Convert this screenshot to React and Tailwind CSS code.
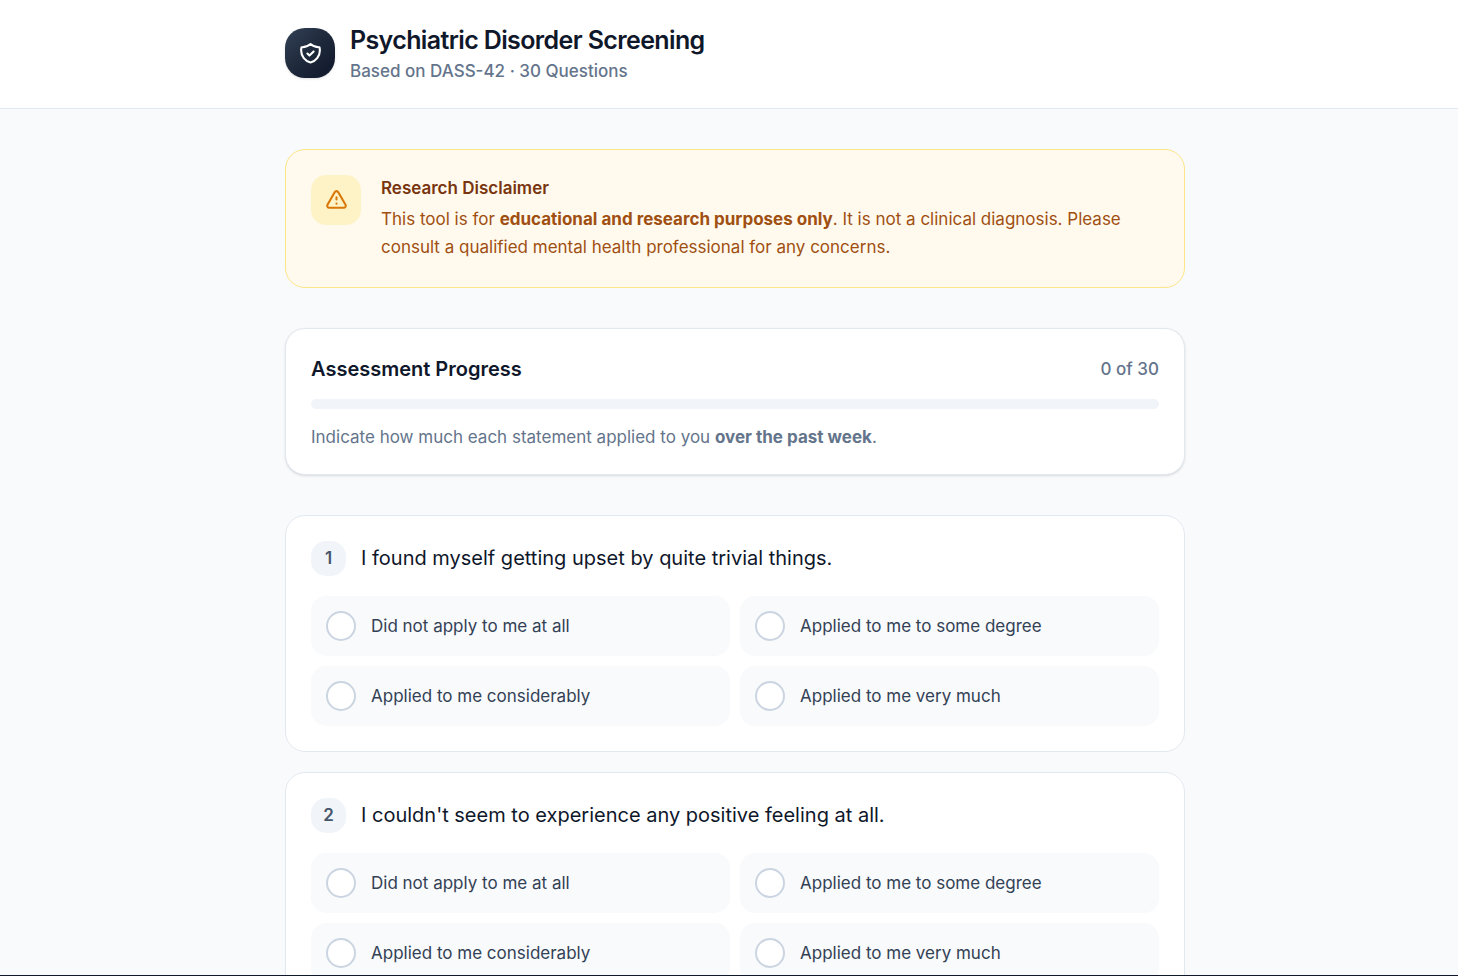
// App.jsx
import React, { useState } from "react";

const TOTAL_QUESTIONS = 30;

const QUESTIONS = [
  { id: 1, text: "I found myself getting upset by quite trivial things." },
  { id: 2, text: "I couldn't seem to experience any positive feeling at all." },
];

const OPTIONS = [
  { value: 0, label: "Did not apply to me at all" },
  { value: 1, label: "Applied to me to some degree" },
  { value: 2, label: "Applied to me considerably" },
  { value: 3, label: "Applied to me very much" },
];

function Icon({ d, className }) {
  return (
    <svg className={className} viewBox="0 0 24 24" fill="none" stroke="currentColor" strokeWidth={2} aria-hidden="true">
      <path strokeLinecap="round" strokeLinejoin="round" d={d} />
    </svg>
  );
}

const SHIELD_PATH =
  "M9 12l2 2 4-4m5.618-4.016A11.955 11.955 0 0112 2.944a11.955 11.955 0 01-8.618 3.04A12.02 12.02 0 003 9c0 5.591 3.824 10.29 9 11.622 5.176-1.332 9-6.03 9-11.622 0-1.042-.133-2.052-.382-3.016z";

const WARNING_PATH =
  "M12 9v2m0 4h.01m-6.938 4h13.856c1.54 0 2.502-1.667 1.732-3L13.732 4c-.77-1.333-2.694-1.333-3.464 0L3.34 16c-.77 1.333.192 3 1.732 3z";

function Header() {
  return (
    <header className="shrink-0 border-b border-[#e2e8f0] bg-white pl-3">
      <div className="mx-auto flex max-w-[960px] items-center gap-[15px] px-[30px] pt-6 pb-[26px]">
        <div className="flex size-[50px] shrink-0 items-center justify-center rounded-[20px] bg-linear-to-br/srgb from-[#334155] via-[#1e293b] to-[#0f172a] shadow-sm">
          <Icon d={SHIELD_PATH} className="size-[25px] text-white" />
        </div>
        <div>
          <h1 className="text-[25px] leading-8 font-semibold tracking-tight text-[#0f172a]">
            Psychiatric Disorder Screening
          </h1>
          <p className="mt-1 text-[17px] leading-[22px] font-medium text-[#64748b]">
            Based on DASS-42 · 30 Questions
          </p>
        </div>
      </div>
    </header>
  );
}

function Disclaimer() {
  return (
    <section className="flex items-start gap-5 rounded-[20px] border border-[#fde68a] bg-[#fffaed] p-[25px]">
      <div className="flex size-[50px] shrink-0 items-center justify-center rounded-[15px] bg-[#fef3c7]">
        <Icon d={WARNING_PATH} className="size-[25px] text-[#d97706]" />
      </div>
      <div>
        <h2 className="text-[17px] leading-[26px] font-semibold text-[#78350f]">Research Disclaimer</h2>
        <p className="mt-1 mb-px text-[17px] leading-7 text-[#a04f12]">
          This tool is for <strong className="font-bold">educational and research purposes only</strong>. It is not a
          clinical diagnosis. Please consult a qualified mental health professional for any concerns.
        </p>
      </div>
    </section>
  );
}

function ProgressCard({ answered }) {
  const percent = (answered / TOTAL_QUESTIONS) * 100;

  return (
    <section className="rounded-[20px] border border-[#e2e8f0] bg-white p-[25px] shadow-sm">
      <div className="flex items-center justify-between">
        <h2 className="text-[20px] leading-[30px] font-semibold text-[#0f172a]">Assessment Progress</h2>
        <span className="text-[17px] leading-[25px] font-medium text-[#64748b]">
          {answered} of {TOTAL_QUESTIONS}
        </span>
      </div>
      <div className="mt-[15px] h-2.5 overflow-hidden rounded-full bg-[#f1f5f9]">
        <div className="h-full rounded-full bg-[#1e293b]" style={{ width: `${percent}%` }} />
      </div>
      <p className="mt-4 text-[17px] leading-6 text-[#64748b]">
        Indicate how much each statement applied to you <strong className="font-bold">over the past week</strong>.
      </p>
    </section>
  );
}

function QuestionCard({ question, value, onChange }) {
  return (
    <fieldset className="rounded-[20px] border border-[#e2e8f0] bg-white p-[25px]">
      <legend className="float-left flex w-full items-start gap-[15px]">
        <span className="flex size-[35px] shrink-0 items-center justify-center rounded-[15px] bg-[#f1f5f9] text-[17px] leading-[25px] font-semibold text-[#475569]">
          {question.id}
        </span>
        <span className="text-[20px] leading-[35px] text-[#0f172a]">{question.text}</span>
      </legend>

      <div className="clear-both grid grid-cols-1 gap-2.5 pt-5 sm:grid-cols-2">
        {OPTIONS.map((option) => (
          <label
            key={option.value}
            className="flex cursor-pointer items-center gap-[15px] rounded-[15px] bg-[#f8fafc] p-[15px] transition hover:bg-[#f1f5f9]"
          >
            <input
              type="radio"
              name={`question-${question.id}`}
              checked={value === option.value}
              onChange={() => onChange(question.id, option.value)}
              className="size-[30px] shrink-0 cursor-pointer appearance-none rounded-full border-2 border-[#cbd5e1] bg-white checked:border-8 checked:border-[#1e293b]"
            />
            <span className="text-[17px] leading-[25px] text-[#334155]">{option.label}</span>
          </label>
        ))}
      </div>
    </fieldset>
  );
}

export default function App() {
  const [answers, setAnswers] = useState({});

  const handleAnswer = (id, value) => {
    setAnswers((prev) => ({ ...prev, [id]: value }));
  };

  return (
    <div className="flex h-screen flex-col border-b border-[#0f172a] bg-[#f8fafc] font-['Inter',sans-serif]">
      <Header />

      <main className="min-h-0 flex-1 overflow-y-auto pl-3 [scrollbar-width:none]">
        <div className="mx-auto flex max-w-[960px] flex-col gap-10 px-[30px] py-10">
          <Disclaimer />
          <ProgressCard answered={Object.keys(answers).length} />

          {/* Questions */}
          <div className="flex flex-col gap-5">
            {QUESTIONS.map((q) => (
              <QuestionCard key={q.id} question={q} value={answers[q.id]} onChange={handleAnswer} />
            ))}
          </div>
        </div>
      </main>
    </div>
  );
}
